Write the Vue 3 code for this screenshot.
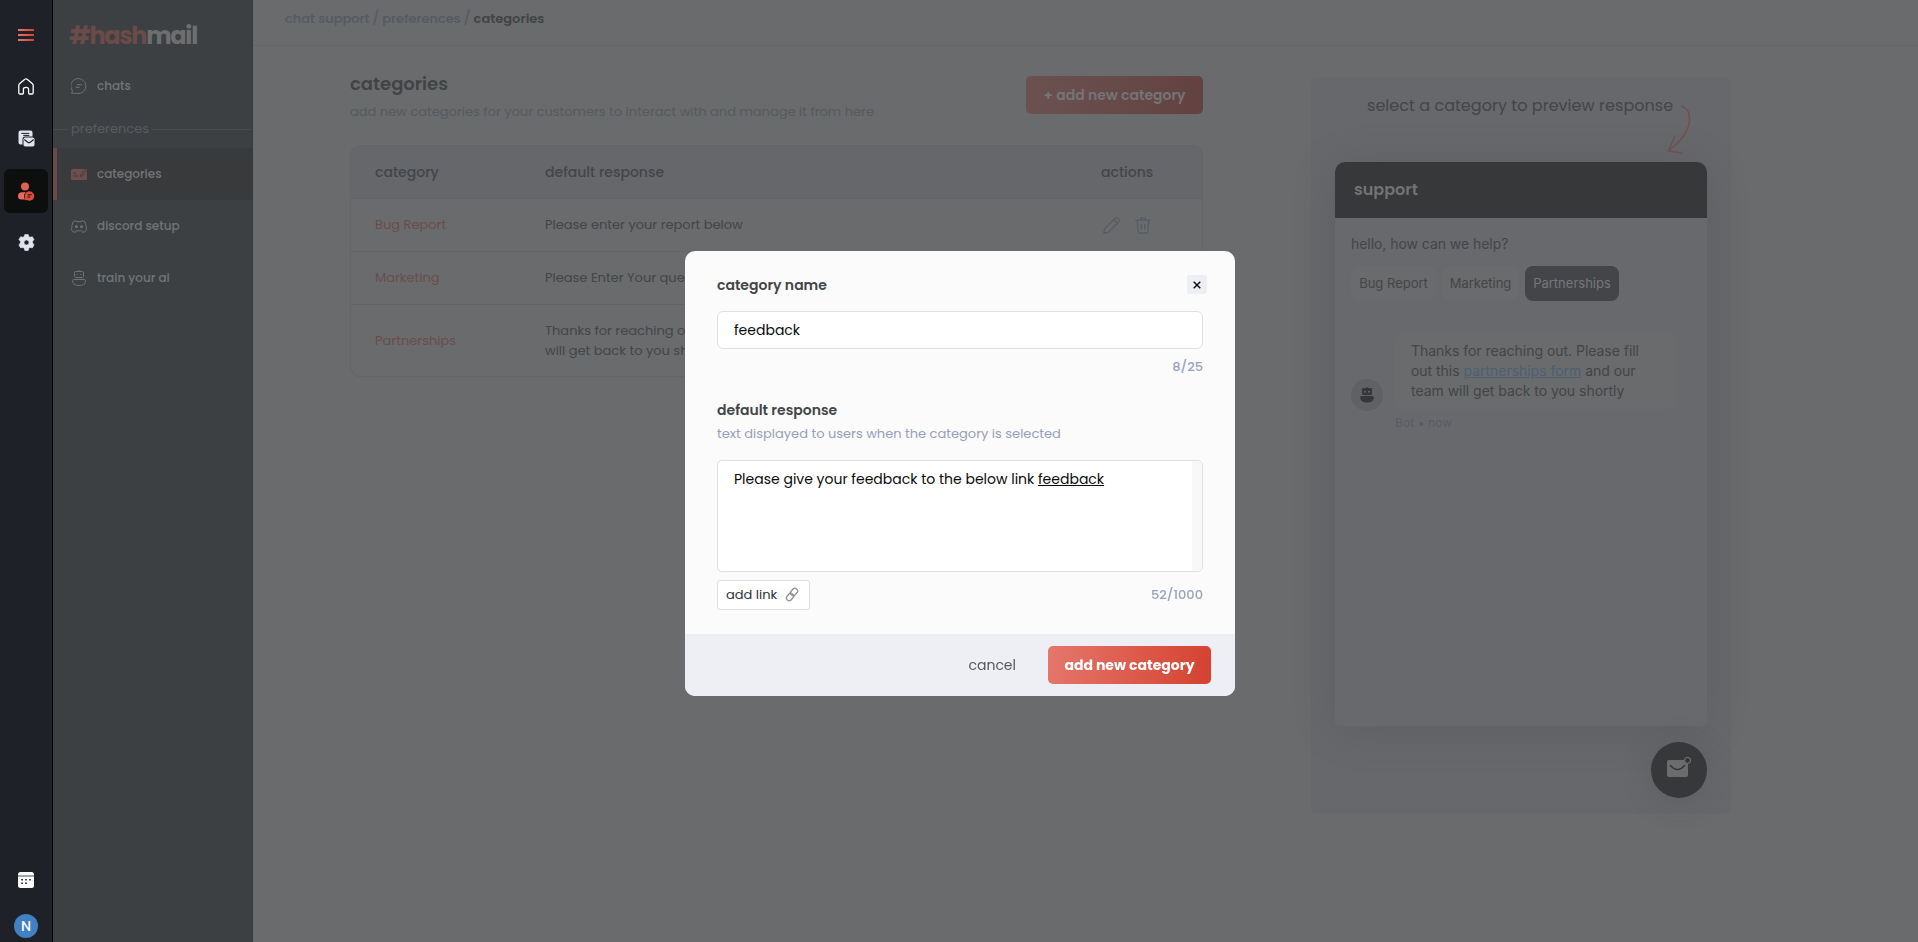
<template>
  <div class="app">
    <nav class="rail">
      <div class="rail-item">
        <svg width="16" height="12" viewBox="0 0 16 12">
          <defs>
            <linearGradient id="redGrad" x1="0" y1="0" x2="16" y2="0" gradientUnits="userSpaceOnUse">
              <stop offset="0" stop-color="#e5756a" />
              <stop offset="1" stop-color="#d64332" />
            </linearGradient>
          </defs>
          <path d="M0 0h16v2H0ZM0 5h16v2H0ZM0 10h16v2H0Z" fill="url(#redGrad)" />
        </svg>
      </div>
      <div class="rail-item up">
        <svg width="16" height="17" viewBox="0 0 16 17" fill="none" stroke="#fff" stroke-width="1.300" stroke-linejoin="round">
          <path d="M.8 7.200Q.8 6.300 1.500 5.700L6.900 1.200Q8 .4 9.100 1.200L14.500 5.700Q15.200 6.300 15.200 7.200V14.700Q15.200 16 14 16H11.600Q10.600 16 10.600 15V11.300Q10.600 9.400 8 9.400T5.400 11.300V15Q5.400 16 4.400 16H2Q.8 16 .8 14.700Z" />
        </svg>
      </div>
      <div class="rail-item up">
        <svg width="17" height="17" viewBox="0 0 17 17">
          <path d="M2.500.5h10a2 2 0 0 1 2 2V6.500H7a2.500 2.500 0 0 0-2.500 2.500v5.500H2.500a2 2 0 0 1-2-2V2.500a2 2 0 0 1 2-2Z" fill="#e1e4ee" />
          <path d="M3.300 3.400h8M5.300 5.400h6" stroke="#1f2129" stroke-width="1" />
          <rect x="5.500" y="7.500" width="11" height="9" rx="1.800" fill="#e1e4ee" />
          <path d="m6.300 9.500 3.500 2.700q1.200.9 2.400 0l3.500-2.700" fill="none" stroke="#1f2129" stroke-width="1.100" />
        </svg>
      </div>
      <div class="rail-item active">
        <svg width="18" height="19" viewBox="0 0 18 19">
          <circle cx="8" cy="4.500" r="4" fill="#e35f50" />
          <path d="M1 14.500Q1 10.300 5 10.300H9Q6.500 12 7 14.500 7.300 16.500 8.300 17.500H4.500Q1 17.500 1 14.500Z" fill="#e56d60" />
          <path d="M12.500 9.300a4.700 4.700 0 1 1-2.300 8.800l-2.300.2.300-2.300a4.700 4.700 0 0 1 4.300-6.700Z" fill="#dc4d3c" />
          <path d="M10.500 12.800h4.200M10.500 15h2.700" stroke="#141313" stroke-width="1" />
        </svg>
      </div>
      <div class="rail-item up">
        <svg width="17" height="17" viewBox="0 0 17 17">
          <path
            fill="#e1e4ee"
            fill-rule="evenodd"
            d="M6.800.5h3.400l.6 2.100 1.300.7 2.200-.6L16 5.600 14.600 7.300v1.600l1.500 2-1.800 3-2.200-.5-1.300.8-.6 2.300H6.800l-.6-2.300-1.300-.8-2.200.5-1.800-3 1.500-2V7.300L.9 5.600 2.700 2.700l2.200.6 1.300-.7ZM8.500 6a2.500 2.500 0 1 0 0 5 2.500 2.500 0 0 0 0-5Z"
            stroke="#e1e4ee"
            stroke-width=".6"
            stroke-linejoin="round"
          />
        </svg>
      </div>
      <div class="rail-bottom">
        <svg width="16" height="16" viewBox="0 0 16 16">
          <rect width="16" height="16" rx="2.500" fill="#fcfcfc" />
          <path d="M0 4h16" stroke="#4b4d55" stroke-width="1" />
          <path d="M3.300 7.800h1.600M7.200 7.800h1.600M11.200 7.800h1.600M3.300 11.300h1.600M7.200 11.300h1.600" stroke="#1f2129" stroke-width="1.600" />
        </svg>
        <div class="user">N</div>
      </div>
    </nav>

    <aside class="sidebar">
      <div class="logo"><span>#hash</span>mail</div>
      <a class="side-link">
        <svg width="16" height="16" viewBox="0 0 16 16" fill="none" stroke="#6e7175">
          <path d="M.6 15.400Q1.700 14 1.300 12.500A7.500 7.500 0 1 1 4.500 15Q3 15.700.6 15.400Z" />
          <path d="M5.800 6.700h5M4.800 9.300h4" />
        </svg>
        <span>chats</span>
      </a>
      <div class="divider"><span>preferences</span></div>
      <a class="side-link selected">
        <svg width="16" height="11" viewBox="0 0 16 11">
          <rect width="16" height="11" rx="1.500" fill="#6f4f4d" />
          <path d="M2 4h3.500M2 7h5" stroke="#3a3b3c" stroke-width="1" />
          <path d="m9.300 7.500.9-2.300L14.800 0M9.300 7.500l2.300-.8L16 1.800" fill="none" stroke="#3a3b3c" stroke-width=".9" />
        </svg>
        <span>categories</span>
      </a>
      <a class="side-link">
        <svg width="16" height="13" viewBox="0 0 16 13" fill="none" stroke="#6e7175">
          <path d="M5.500 1.700h5M5.500 10.800h5M5.500 2 5 .6Q2.800.8 2 2 .5 5.500.6 10.300 2 12 4.200 12.400L5.300 10.500M10.500 2 11 .6q2.200.2 3 1.400 1.500 3.500 1.400 8.300-1.400 1.700-3.600 2.100L10.700 10.500" />
          <circle cx="5.400" cy="6.700" r="1.100" fill="#6e7175" />
          <circle cx="10.600" cy="6.700" r="1.100" fill="#6e7175" />
        </svg>
        <span>discord setup</span>
      </a>
      <a class="side-link">
        <svg width="16" height="16" viewBox="0 0 16 16" fill="none" stroke="#6e7175">
          <rect x="3.500" y="1.500" width="9" height="6" rx="1" />
          <path d="M8 0v1.500M5.500 4.500h1.200M9.300 4.500h1.200" />
          <path d="M2.800 9.500h10.400q1.300 0 1.300 1.300 0 4.700-6.500 4.700t-6.500-4.700q0-1.300 1.300-1.300Z" />
        </svg>
        <span>train your ai</span>
      </a>
    </aside>

    <main class="main">
      <header class="crumbs">chat support <i>/</i> preferences <i>/</i> <b>categories</b></header>
      <div class="content">
        <section class="list">
          <div class="list-head">
            <div>
              <h1>categories</h1>
              <p>add new categories for your customers to interact with and manage it from here</p>
            </div>
            <button class="btn-dim">+ add new category</button>
          </div>
          <div class="table">
            <div class="tr th">
              <span>category</span>
              <span>default response</span>
              <span>actions</span>
            </div>
            <div v-for="row in rows" :key="row.name" class="tr" :class="{ tall: row.tall }">
              <span class="name">{{ row.name }}</span>
              <span class="response">{{ row.response }}</span>
              <span class="actions">
                <svg width="17" height="17" viewBox="0 0 17 17" fill="none" stroke="#575a64" stroke-width="1.200" stroke-linejoin="round">
                  <path d="M.8 16.200 1.600 11.700 12 1.300Q13.600 0 15.300 1.600 17 3.300 15.600 4.900L5.200 15.300ZM10.700 2.700l3.600 3.600" />
                </svg>
                <svg width="16" height="17" viewBox="0 0 16 17" fill="none" stroke="#575a64" stroke-width="1.200">
                  <path d="M.3 3.200h15.400M5.300 3Q5.500.7 8 .7T10.700 3M2.300 3.500 3 14Q3.200 16.200 5 16.200h6q1.800 0 2-2.200l.7-10.500M6.300 7v5.500M9.700 7v5.500" />
                </svg>
              </span>
            </div>
          </div>
        </section>

        <section class="preview">
          <p class="hint">select a category to preview response</p>
          <svg class="arrow" width="24" height="50" viewBox="0 0 24 50" fill="none" stroke="#70504f" stroke-width="1.500" stroke-linecap="round" stroke-linejoin="round">
            <path d="M14.500 1Q23 4 22.500 15.500 21.500 31 1.500 45.500M8 31 1.200 45.700l14.300 2.600" />
          </svg>
          <div class="widget">
            <div class="widget-head">support</div>
            <div class="widget-body">
              <p class="hello">hello, how can we help?</p>
              <div class="chips">
                <span class="chip c1">Bug Report</span>
                <span class="chip c2">Marketing</span>
                <span class="chip c3 on">Partnerships</span>
              </div>
              <div class="msg">
                <div class="bot">
                  <svg width="14" height="16" viewBox="0 0 14 16" fill="#343637">
                    <path d="M6.300 0h1.400v1H6.300Z" />
                    <rect x="2" y="1" width="10" height="7" rx="1.200" />
                    <path d="M1.500 9h11Q14 9 13.800 11 13 15.500 7 15.500T.2 11Q0 9 1.500 9Z" />
                    <path d="M4.200 4h1.500v1.500H4.200ZM8.300 4h1.500v1.500H8.300Z" fill="#707274" />
                  </svg>
                </div>
                <div class="bubble">
                  Thanks for reaching out. Please fill<br />
                  out this <u>partnerships form</u> and our<br />
                  team will get back to you shortly
                </div>
              </div>
              <p class="meta">Bot • now</p>
            </div>
          </div>
          <div class="fab">
            <svg width="26" height="22" viewBox="0 0 26 22">
              <rect x="1" y="3" width="21" height="17" rx="2" fill="#6a6c6e" />
              <path d="M4 8q7.500 9 15 0" fill="none" stroke="#343637" stroke-width="1.300" />
              <circle cx="21.500" cy="3.500" r="3" fill="#343637" stroke="#6a6c6e" stroke-width="1.200" />
            </svg>
          </div>
        </section>
      </div>
    </main>

    <div v-if="showModal" class="overlay">
      <form class="modal" @submit.prevent="closeModal">
        <div class="modal-body">
          <div class="modal-top">
            <label for="name">category name</label>
            <button type="button" class="close" @click="closeModal">
              <svg width="8" height="8" viewBox="0 0 8 8" stroke="#111" stroke-width="1.500"><path d="M.7.700l6.600 6.600M7.300.700.700 7.300" /></svg>
            </button>
          </div>
          <input id="name" v-model="name" class="form-input" />
          <div class="count">{{ name.length }}/25</div>
          <h3>default response</h3>
          <p class="sub">text displayed to users when the category is selected</p>
          <div class="editor">
            <div class="editor-text">Please give your feedback to the below link <u>feedback</u></div>
            <div class="gutter"></div>
          </div>
          <div class="editor-foot">
            <button type="button" class="add-link">
              <span>add link</span>
              <svg width="14" height="15" viewBox="0 0 14 15" fill="none" stroke="#8f9093" stroke-width="1.300">
                <rect x="-4" y="-2.700" width="8" height="5.400" rx="2.700" transform="translate(9 5) rotate(-50)" />
                <rect x="-4" y="-2.700" width="8" height="5.400" rx="2.700" transform="translate(5 10) rotate(-50)" />
              </svg>
            </button>
            <span class="count2">52/1000</span>
          </div>
        </div>
        <div class="modal-foot">
          <button type="button" class="cancel" @click="closeModal">cancel</button>
          <button type="submit" class="btn-primary">add new category</button>
        </div>
      </form>
    </div>
  </div>
</template>

<script setup>
import { ref } from 'vue';

const showModal = ref(true);
const name = ref('feedback');

const rows = ref([
  { name: 'Bug Report', response: 'Please enter your report below' },
  { name: 'Marketing', response: 'Please Enter Your question below' },
  {
    name: 'Partnerships',
    response: 'Thanks for reaching out. Please fill out this partnerships form and our team\nwill get back to you shortly',
    tall: true
  }
]);

function closeModal() {
  showModal.value = false;
}
</script>

<style>
body {
  margin: 0;
  overflow: hidden;
}
</style>

<style scoped>
* {
  box-sizing: border-box;
}

.app {
  display: flex;
  height: 942px;
  background: #696b6c;
  font-family: Poppins, Inter, sans-serif;
  font-size: 14px;
  color: #434548;
}

h1,
h3,
p {
  margin: 0;
}

button {
  font-family: inherit;
  border: none;
  cursor: pointer;
  white-space: nowrap;
}

/* icon rail */
.rail {
  width: 53px;
  display: flex;
  flex-direction: column;
  align-items: center;
  padding: 13px 0 4px;
  gap: 8px;
  background: #1f2129;
  border-right: 1px solid #000;
}

.rail-item {
  width: 44px;
  height: 44px;
  display: flex;
  align-items: center;
  justify-content: center;
}

.rail-item.up {
  padding-bottom: 1px;
}

.rail-item.active {
  background: #0d0f0e;
  border-radius: 6px;
}

.rail-bottom {
  margin-top: auto;
  display: flex;
  flex-direction: column;
  align-items: center;
  gap: 26px;
}

.user {
  width: 24px;
  height: 24px;
  border-radius: 50%;
  background: #4181c2;
  color: #fff;
  font-size: 14px;
  font-weight: 500;
  line-height: 24px;
  text-align: center;
}

/* sidebar */
.sidebar {
  width: 200px;
  background: #3c4042;
  border-right: 1px solid #37393a;
}

.logo {
  height: 60px;
  padding: 18px 0 0 16px;
  font-size: 24px;
  line-height: 36px;
  font-weight: 700;
  letter-spacing: -1.3px;
  color: #6c6e70;
}

.logo span {
  color: #6b4b49;
}

.side-link {
  display: flex;
  align-items: center;
  gap: 10px;
  height: 52px;
  padding-left: 18px;
  font-size: 12px;
  font-weight: 500;
  color: #717477;
}

.side-link.selected {
  padding-left: 14px;
  border-left: 4px solid #6b4947;
  background: #393a3b;
}

.divider {
  display: flex;
  align-items: center;
  height: 36px;
  padding-bottom: 2px;
  font-size: 13px;
  line-height: 34px;
  color: #585b64;
}

.divider::before,
.divider::after {
  content: '';
  height: 1px;
  background: #484b4e;
}

.divider::before {
  width: 16px;
  margin-right: 2px;
}

.divider::after {
  flex: 1;
  margin-left: 2px;
}

/* main */
.main {
  flex: 1;
}

.crumbs {
  height: 46px;
  padding: 6px 0 0 32px;
  border-bottom: 1px solid #636566;
  font-size: 13px;
  line-height: 25px;
  font-weight: 500;
  color: #565963;
}

.crumbs i {
  margin: 0 -0.5px;
  font-size: 15px;
  font-style: normal;
  font-weight: 400;
  line-height: 1;
}

.crumbs b {
  font-weight: 600;
  color: #414344;
}

.content {
  display: flex;
  gap: 108px;
  padding: 30px 0 0 97px;
}

.list {
  width: 853px;
}

.list-head {
  display: flex;
  justify-content: space-between;
  align-items: flex-start;
  height: 69px;
}

h1 {
  font-size: 18px;
  line-height: 18px;
  margin-top: -1px;
  font-weight: 600;
  color: #414344;
}

.list-head p {
  margin-top: 8px;
  line-height: 22px;
  font-size: 13px;
  color: #565963;
}

.btn-dim {
  width: 177px;
  height: 38px;
  padding: 0;
  border-radius: 5px;
  background: linear-gradient(100deg, #6a5251, #634240);
  color: #737576;
  font-size: 14px;
  font-weight: 600;
}

.table {
  border: 1px solid #636569;
  border-radius: 10px;
  overflow: hidden;
}

.tr {
  display: grid;
  grid-template-columns: 170px 556px 1fr;
  align-items: center;
  height: 53px;
  padding-left: 24px;
  font-size: 13px;
  border-top: 1px solid #626467;
}

.tr.th {
  height: 52px;
  border-top: none;
  background: #66676b;
  font-size: 14px;
  font-weight: 500;
}

.tr.tall {
  height: 72px;
}

.name {
  color: #6b4d4c;
}

.response {
  line-height: 20px;
  white-space: pre;
}

.actions {
  display: flex;
  gap: 15px;
  padding-left: 2px;
}

/* chat preview */
.preview {
  position: relative;
  width: 420px;
  height: 736px;
  margin-top: 2px;
  padding: 16px 24px 0;
  border-radius: 6px;
  background: #67686b;
}

.hint {
  height: 68px;
  padding-left: 32px;
  font-size: 16px;
  line-height: 24px;
  letter-spacing: 0.04px;
}

.arrow {
  position: absolute;
  left: 356px;
  top: 27px;
}

.widget {
  height: 564px;
  border-radius: 10px 10px 5px 5px;
  overflow: hidden;
  background: #68696d;
  box-shadow: 0 4px 40px rgba(60, 62, 70, 0.22);
  font-family: Inter, sans-serif;
}

.widget-head {
  height: 56px;
  padding-left: 19px;
  background: #37383a;
  color: #717375;
  font-family: Poppins, Inter, sans-serif;
  font-size: 16px;
  font-weight: 600;
  line-height: 55px;
}

.widget-body {
  padding: 16px;
}

.hello {
  line-height: 20px;
  letter-spacing: -0.05px;
}

.chips {
  display: flex;
  gap: 6px;
  margin-top: 12px;
}

.chip {
  height: 35px;
  line-height: 35px;
  text-align: center;
  border-radius: 8px;
  background: #696b6c;
  font-size: 13px;
}

.c1 {
  width: 85px;
}

.c2 {
  width: 77px;
}

.c3 {
  width: 94px;
}

.chip.on {
  background: #444549;
  color: #75777a;
}

.msg {
  display: flex;
  align-items: flex-end;
  gap: 12px;
  margin-top: 32px;
}

.bot {
  width: 32px;
  height: 32px;
  margin-bottom: -2px;
  display: flex;
  align-items: center;
  justify-content: center;
  border-radius: 50%;
  background: #5f6165;
}

.bubble {
  width: 281px;
  height: 76px;
  padding: 8px 16px;
  border-radius: 6px;
  background: #696b6c;
  line-height: 20px;
  letter-spacing: -0.03px;
  white-space: nowrap;
}

.bubble u {
  color: #4c5f74;
}

.meta {
  margin: 5px 0 0 44px;
  font-size: 12px;
  letter-spacing: 0.1px;
  line-height: 18px;
  color: #585b62;
}

.fab {
  width: 56px;
  height: 56px;
  margin: 16px 0 0 auto;
  display: flex;
  align-items: center;
  justify-content: center;
  border-radius: 50%;
  background: #373839;
  box-shadow: 0 4px 32px rgba(60, 62, 70, 0.2);
}

.fab svg {
  margin-top: -5px;
}

/* modal */
.overlay {
  position: fixed;
  inset: 0;
  display: flex;
  align-items: center;
  justify-content: center;
  padding: 5px 0 0 2px;
}

.modal {
  width: 550px;
  height: 445px;
  display: flex;
  flex-direction: column;
  border-radius: 10px;
  overflow: hidden;
  background: #fbfbfb;
}

.modal-body {
  flex: 1;
  padding: 24px 32px 0;
}

.modal-top {
  display: flex;
  justify-content: space-between;
  margin-right: -4px;
  height: 36px;
}

.modal-top label,
h3 {
  font-size: 14px;
  line-height: 20px;
  font-weight: 600;
  color: #434547;
}

.close {
  width: 20px;
  height: 19px;
  padding: 0;
  display: flex;
  align-items: center;
  justify-content: center;
  border-radius: 3px;
  background: #eeeff4;
}

.form-input {
  display: block;
  width: 486px;
  height: 38px;
  padding: 0 16px;
  border: 1px solid #dedfe6;
  border-radius: 6px;
  background: #fff;
  font-family: inherit;
  font-size: 14px;
  color: #0c0c0c;
  outline: none;
}

.count,
.count2 {
  font-size: 13px;
  font-weight: 500;
  line-height: 20px;
  text-align: right;
  color: #9ba3bb;
}

.count {
  height: 44px;
  padding-top: 8px;
}

h3 {
  margin-top: 7px;
}

.sub {
  margin-top: 4px;
  height: 36px;
  font-size: 13px;
  line-height: 20px;
  color: #979fb8;
}

.editor {
  display: flex;
  width: 486px;
  height: 112px;
  border: 1px solid #dedfe6;
  border-radius: 5px;
  overflow: hidden;
  background: #fff;
}

.editor-text {
  flex: 1;
  padding: 8px 0 0 16px;
  font-size: 14px;
  line-height: 21px;
  color: #0c0c0c;
  white-space: nowrap;
}

.gutter {
  width: 10px;
  background: #f9f8f8;
}

.editor-foot {
  display: flex;
  justify-content: space-between;
  margin-top: 8px;
}

.add-link {
  display: flex;
  align-items: center;
  justify-content: space-between;
  width: 93px;
  height: 30px;
  padding: 0 10px 1px 8px;
  border: 1px solid #dedfe3;
  border-radius: 3px;
  background: #fff;
  font-size: 13px;
  color: #2f3136;
}

.count2 {
  padding-top: 5px;
}

.modal-foot {
  display: flex;
  align-items: center;
  justify-content: flex-end;
  gap: 32px;
  height: 62px;
  padding-right: 24px;
  background: #eeeff4;
}

.cancel {
  padding: 0;
  background: none;
  font-size: 14px;
  color: #55575b;
}

.btn-primary {
  width: 163px;
  height: 38px;
  padding: 0;
  border-radius: 5px;
  background: linear-gradient(100deg, #e5776c, #d5412f);
  color: #fff;
  font-size: 14px;
  font-weight: 700;
}
</style>
